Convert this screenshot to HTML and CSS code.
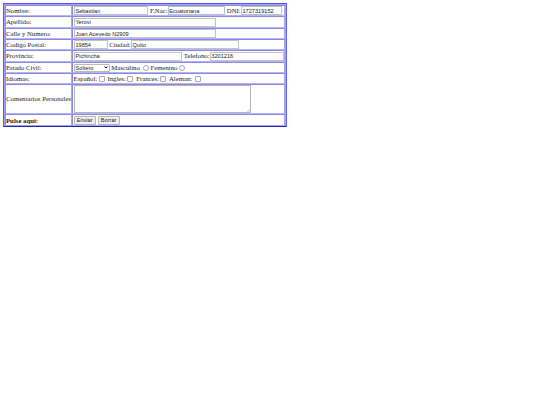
FILE: index.html
```html
<!DOCTYPE html>
<html lang="es">
<head>
    <meta charset="UTF-8">
    <title>Formulario</title>
    <link rel="stylesheet" href="styles.css">
</head>
<body>
    <form>
        <table class="formulario">
            <tr>
                <td class="etiqueta">Nombre:</td>
                <td><div class="campos"><input type="text" class="medio" value="Sebastian"><span> F.Nac:</span><input type="text" class="nac" value="Ecuatoriana"><span> DNI:</span><input type="text" class="dni" value="1727319152"></div></td>
            </tr>
            <tr class="alta">
                <td class="etiqueta">Apellido:</td>
                <td><div class="campos"><input type="text" class="largo" value="Yerovi"></div></td>
            </tr>
            <tr>
                <td class="etiqueta">Calle y Numero:</td>
                <td><div class="campos"><input type="text" class="largo" value="Juan Acevedo N2909"></div></td>
            </tr>
            <tr>
                <td class="etiqueta">Codigo Postal:</td>
                <td><div class="campos"><input type="text" class="postal" value="19854"><span> Ciudad:</span><input type="text" class="ciudad" value="Quito"></div></td>
            </tr>
            <tr class="alta">
                <td class="etiqueta">Provincia:</td>
                <td><div class="campos"><input type="text" class="ciudad" value="Pichincha"><span> Telefono:</span><input type="text" class="medio" value="3201216"></div></td>
            </tr>
            <tr>
                <td class="etiqueta">Estado Civil:</td>
                <td><div class="campos"><span class="estado"><span class="valor">Soltero</span><svg class="flecha" viewBox="0 0 8 5"><path d="M1 1l3 3 3-3" fill="none" stroke="#000" stroke-width="2"/></svg></span><span> Masculino </span><input type="radio" name="sexo"><span>Femenino</span><input type="radio" name="sexo"></div></td>
            </tr>
            <tr>
                <td class="etiqueta">Idiomas:</td>
                <td><div class="campos"><span>Español:</span><input type="checkbox"><span> Ingles:</span><input type="checkbox"><span> Frances:</span><input type="checkbox"><span> Aleman: </span><input type="checkbox"></div></td>
            </tr>
            <tr class="comentarios">
                <td class="etiqueta">Comentarios Personales</td>
                <td><div class="campos"><div class="area"><textarea></textarea><svg class="tirador" viewBox="0 0 4 4"><path d="M0 4L4 0M2 4L4 2" stroke="#999" stroke-width=".6"/></svg></div></div></td>
            </tr>
            <tr class="botones">
                <td class="etiqueta"><b>Pulse aqui:</b></td>
                <td><div class="campos"><input type="submit" value="Enviar"><input type="reset" value="Borrar"></div></td>
            </tr>
        </table>
    </form>
</body>
</html>
```

FILE: styles.css
```css
body {
    margin: 3px;
    background-color: #fff;
    color: #1a1a1a;
    font-family: "Liberation Serif", "Times New Roman", serif;
    font-size: 6.75px;
    line-height: 8px;
}
.formulario {
    box-sizing: border-box;
    width: 284px;
    table-layout: fixed;
    border: 1px solid #5656da;
    border-right-color: #6262dc;
    border-bottom-color: #2424a6;
    border-spacing: 0;
    padding: 1px;
    background-color: #a4a4fa;
}
.formulario td {
    box-sizing: border-box;
    height: 11px;
    padding: 0;
    border: 1px solid #8989df;
    border-right-color: #a6a6f5;
    border-bottom-color: #b4b4fb;
    background-color: #fff;
    white-space: pre;
    vertical-align: middle;
}
.formulario .alta td {
    height: 12px;
}
.formulario .comentarios td {
    height: 30px;
}
.formulario .botones td {
    padding-top: 1px;
    border-bottom-width: 0;
}
.formulario .etiqueta {
    width: 67px;
}
.campos {
    display: flex;
    align-items: center;
    height: 9px;
    padding-left: 0.6px;
}
.comentarios .campos {
    height: 28px;
}
input, .estado, textarea {
    box-sizing: border-box;
    flex: none;
    margin: 0;
    font-family: "Liberation Sans", Arial, sans-serif;
    font-size: 5.625px;
    line-height: 7px;
    color: #1a1a1a;
}
input[type="text"] {
    height: 9px;
    padding: 0 0.8px;
    border: 1px solid #c2c2c2;
    background-color: #fff;
}
.medio {
    width: 74.6px;
}
.largo {
    width: 142.6px;
}
.nac {
    width: 57.6px;
}
.dni {
    width: 41px;
}
.postal {
    width: 34px;
}
.ciudad {
    width: 108.6px;
}
.estado {
    display: flex;
    align-items: center;
    justify-content: space-between;
    width: 36px;
    height: 8px;
    padding: 0 1px;
    border: 1px solid #b8b8b8;
    border-radius: 1px;
}
.valor {
    padding-top: 1px;
}
.flecha {
    width: 4px;
    height: 2.5px;
}
input[type="radio"], input[type="checkbox"] {
    appearance: none;
    width: 6px;
    height: 6px;
    border: 1px solid #a8a8a8;
    border-radius: 1px;
    background-color: #fff;
}
input[type="radio"] {
    margin: 0 1.5px;
    border-radius: 50%;
}
input[type="checkbox"] {
    margin: 0 1.3px;
}
.area {
    position: relative;
    width: 177px;
    height: 28px;
}
textarea {
    display: block;
    width: 177px;
    height: 28px;
    border: 1px solid #b5b5b5;
    resize: none;
}
.tirador {
    position: absolute;
    right: 1px;
    bottom: 1px;
    width: 3px;
    height: 3px;
}
input[type="submit"], input[type="reset"] {
    width: 22px;
    height: 9px;
    margin-right: 2px;
    padding: 0;
    border: 1px solid #b5b5b5;
    border-radius: 1px;
    background-color: #efefef;
    text-align: center;
}
```
